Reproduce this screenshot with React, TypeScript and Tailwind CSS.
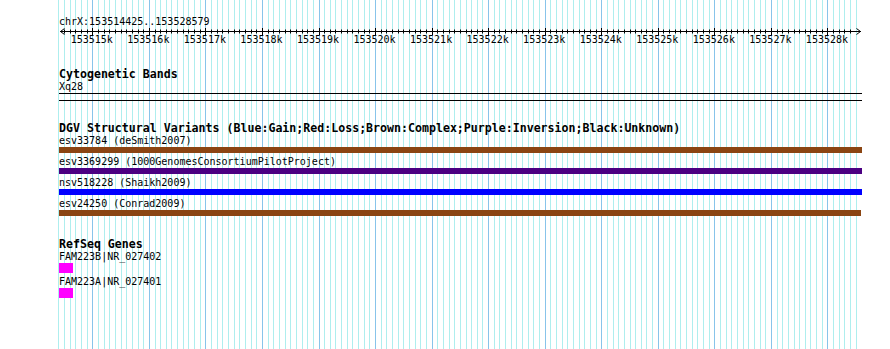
import React from 'react';

// scale: 153515k sits at x=92.3, one minor division (100 bp) = 5.655px
const MAJOR0 = 92.3;
const STEP = 5.655;

const gridLines = Array.from({ length: 142 }, (_, i) => i - 6);
const majors = Array.from({ length: 14 }, (_, i) => i);

const variants = [
    { label: 'esv33784 (deSmith2007)', color: 'bg-[#8b4513]', width: 'w-[803px]' },
    { label: 'esv3369299 (1000GenomesConsortiumPilotProject)', color: 'bg-[#4b0082]', width: 'w-[803px]' },
    { label: 'nsv518228 (Shaikh2009)', color: 'bg-[#0000ff]', width: 'w-[803px]' },
    { label: 'esv24250 (Conrad2009)', color: 'bg-[#8b4513]', width: 'w-[802px]' },
];

const genes = ['FAM223B|NR_027402', 'FAM223A|NR_027401'];

const Grid = () => (
    <svg className="absolute inset-0" width={890} height={349}>
        {gridLines.map((k) => (
            <rect
                key={k}
                x={Math.round(MAJOR0 + k * STEP)}
                y={0}
                width={1}
                height={349}
                fill={k % 10 === 0 ? '#88c4ea' : '#aeeeee'}
            />
        ))}
    </svg>
);

const Ruler = () => (
    <svg width={890} height={22} className="block">
        <line x1={60} y1={3.5} x2={861} y2={3.5} stroke="#000" strokeWidth={1} />
        <path d="M60.5 3.5 L64.5 0.5 M60.5 3.5 L64.5 6.5" stroke="#000" strokeWidth={1} fill="none" />
        <path d="M860.5 3.5 L856.5 0.5 M860.5 3.5 L856.5 6.5" stroke="#000" strokeWidth={1} fill="none" />
        {gridLines
            .filter((k) => k > -6 && k < 135)
            .map((k) => {
                const x = Math.round(MAJOR0 + k * STEP) + 0.5;
                const major = k % 10 === 0;
                return (
                    <line
                        key={k}
                        x1={x}
                        x2={x}
                        y1={major ? 0 : 1.5}
                        y2={major ? 7 : 5.5}
                        stroke="#000"
                        strokeWidth={1}
                    />
                );
            })}
        {majors.map((m) => (
            <text
                key={m}
                x={MAJOR0 + m * 10 * STEP - 0.5}
                y={15.3}
                textAnchor="middle"
                fontSize={10}
                fontFamily="'DejaVu Sans Mono', monospace"
                fill="#000"
            >
                {`${153515 + m}k`}
            </text>
        ))}
    </svg>
);

const Title = ({ children, className = '' }: { children: React.ReactNode; className?: string }) => (
    <div className={`text-[11.6px] leading-[12px] font-bold whitespace-pre ${className}`}>{children}</div>
);

const Label = ({ children }: { children: React.ReactNode }) => (
    <div className="text-[10px] leading-[13px] whitespace-pre">{children}</div>
);

const App = () => {
    return (
        <div className="relative w-[890px] h-[349px] overflow-hidden bg-white text-black font-['DejaVu_Sans_Mono',monospace]">
            <Grid />

            <div className="relative flex flex-col">
                {/* ruler */}
                <div className="h-[50px] flex flex-col">
                    <div className="pt-[15px] pl-[59px]">
                        <Label>chrX:153514425..153528579</Label>
                    </div>
                    <Ruler />
                </div>

                {/* Cytogenetic bands */}
                <div className="pl-[59px] mt-[18px] flex flex-col">
                    <Title>Cytogenetic Bands</Title>
                    <Label>Xq28</Label>
                    <div className="w-[803px] h-[7px] border-t border-black" />
                    <div className="w-[803px] border-t border-black" />
                </div>

                {/* DGV */}
                <div className="pl-[59px] mt-[21px] flex flex-col">
                    <Title>DGV Structural Variants (Blue:Gain;Red:Loss;Brown:Complex;Purple:Inversion;Black:Unknown)</Title>
                    {variants.map((v) => (
                        <div key={v.label} className="flex flex-col h-[21px]">
                            <Label>{v.label}</Label>
                            <div className={`h-[6px] ${v.width} ${v.color}`} />
                        </div>
                    ))}
                </div>

                {/* RefSeq */}
                <div className="pl-[59px] mt-[20px] flex flex-col">
                    <Title>RefSeq Genes</Title>
                    {genes.map((g) => (
                        <div key={g} className="flex flex-col h-[25px]">
                            <Label>{g}</Label>
                            <div className="h-[10px] w-[14px] bg-[#ff00ff]" />
                        </div>
                    ))}
                </div>
            </div>
        </div>
    );
};

export default App;
